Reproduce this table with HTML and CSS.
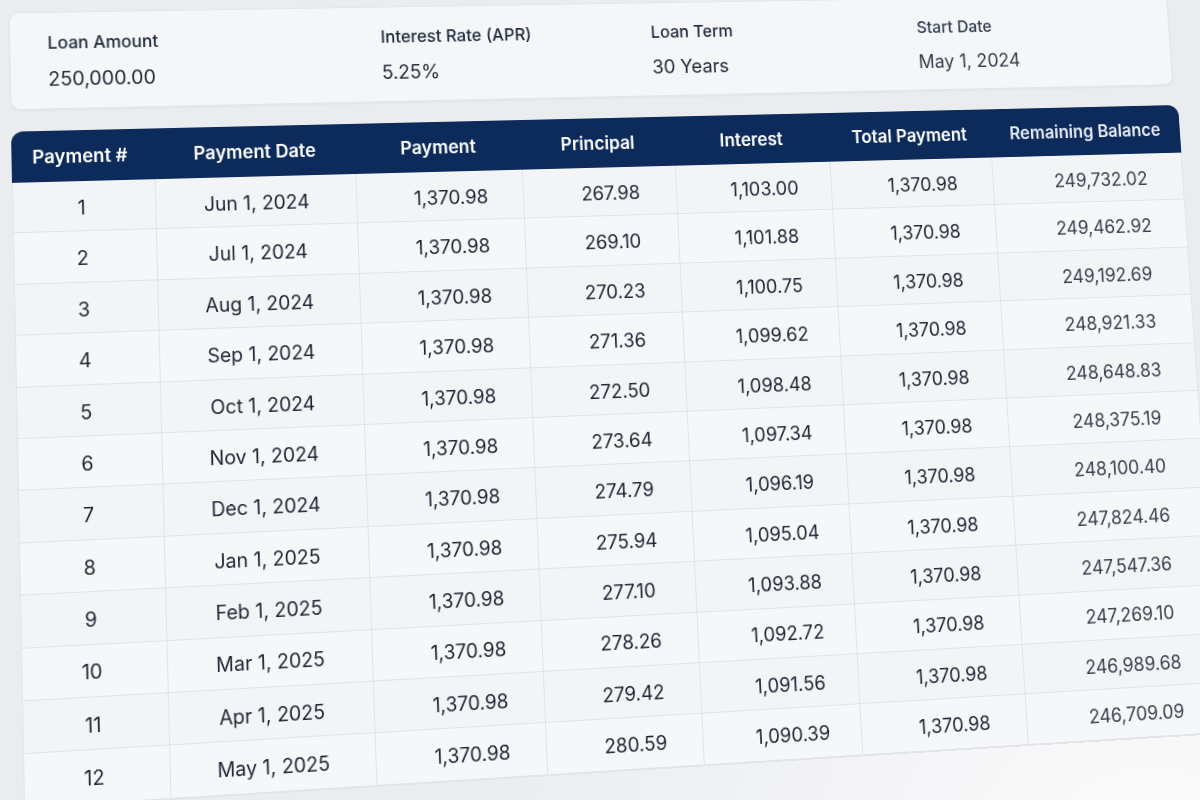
FILE: index.html
```html
<!DOCTYPE html>
<html lang="en">
<head>
<meta charset="utf-8">
<title>Amortization Schedule</title>
<link rel="stylesheet" href="styles.css">
</head>
<body>
<div class="scene">
  <section class="summary">
    <div class="item"><div class="label">Loan Amount</div><div class="value">250,000.00</div></div>
    <div class="item"><div class="label">Interest Rate (APR)</div><div class="value">5.25%</div></div>
    <div class="item"><div class="label">Loan Term</div><div class="value">30 Years</div></div>
    <div class="item far"><div class="label">Start Date</div><div class="value">May 1, 2024</div></div>
  </section>
  <section class="table">
    <div class="row head">
      <div class="cell">Payment #</div>
      <div class="cell">Payment Date</div>
      <div class="cell">Payment</div>
      <div class="cell">Principal</div>
      <div class="cell">Interest</div>
      <div class="cell">Total Payment</div>
      <div class="cell last">Remaining Balance</div>
    </div>
    <div class="row"><div class="cell">1</div><div class="cell">Jun 1, 2024</div><div class="cell num">1,370.98</div><div class="cell num">267.98</div><div class="cell num">1,103.00</div><div class="cell num">1,370.98</div><div class="cell num last">249,732.02</div></div>
    <div class="row"><div class="cell">2</div><div class="cell">Jul 1, 2024</div><div class="cell num">1,370.98</div><div class="cell num">269.10</div><div class="cell num">1,101.88</div><div class="cell num">1,370.98</div><div class="cell num last">249,462.92</div></div>
    <div class="row"><div class="cell">3</div><div class="cell">Aug 1, 2024</div><div class="cell num">1,370.98</div><div class="cell num">270.23</div><div class="cell num">1,100.75</div><div class="cell num">1,370.98</div><div class="cell num last">249,192.69</div></div>
    <div class="row"><div class="cell">4</div><div class="cell">Sep 1, 2024</div><div class="cell num">1,370.98</div><div class="cell num">271.36</div><div class="cell num">1,099.62</div><div class="cell num">1,370.98</div><div class="cell num last">248,921.33</div></div>
    <div class="row"><div class="cell">5</div><div class="cell">Oct 1, 2024</div><div class="cell num">1,370.98</div><div class="cell num">272.50</div><div class="cell num">1,098.48</div><div class="cell num">1,370.98</div><div class="cell num last">248,648.83</div></div>
    <div class="row"><div class="cell">6</div><div class="cell">Nov 1, 2024</div><div class="cell num">1,370.98</div><div class="cell num">273.64</div><div class="cell num">1,097.34</div><div class="cell num">1,370.98</div><div class="cell num last">248,375.19</div></div>
    <div class="row"><div class="cell">7</div><div class="cell">Dec 1, 2024</div><div class="cell num">1,370.98</div><div class="cell num">274.79</div><div class="cell num">1,096.19</div><div class="cell num">1,370.98</div><div class="cell num last">248,100.40</div></div>
    <div class="row"><div class="cell">8</div><div class="cell">Jan 1, 2025</div><div class="cell num">1,370.98</div><div class="cell num">275.94</div><div class="cell num">1,095.04</div><div class="cell num">1,370.98</div><div class="cell num last">247,824.46</div></div>
    <div class="row"><div class="cell">9</div><div class="cell">Feb 1, 2025</div><div class="cell num">1,370.98</div><div class="cell num">277.10</div><div class="cell num">1,093.88</div><div class="cell num">1,370.98</div><div class="cell num last">247,547.36</div></div>
    <div class="row"><div class="cell">10</div><div class="cell">Mar 1, 2025</div><div class="cell num">1,370.98</div><div class="cell num">278.26</div><div class="cell num">1,092.72</div><div class="cell num">1,370.98</div><div class="cell num last">247,269.10</div></div>
    <div class="row"><div class="cell">11</div><div class="cell">Apr 1, 2025</div><div class="cell num">1,370.98</div><div class="cell num">279.42</div><div class="cell num">1,091.56</div><div class="cell num">1,370.98</div><div class="cell num last">246,989.68</div></div>
    <div class="row"><div class="cell">12</div><div class="cell">May 1, 2025</div><div class="cell num">1,370.98</div><div class="cell num">280.59</div><div class="cell num">1,090.39</div><div class="cell num">1,370.98</div><div class="cell num last">246,709.09</div></div>
  </section>
</div>
</body>
</html>
```
FILE: styles.css
```css
html, body {
  margin: 0;
  height: 100%;
  overflow: hidden;
}
body {
  background: radial-gradient(ellipse 700px 420px at 1150px 820px, #fbfbfc 0%, #f1f2f4 55%, #eaecef 100%);
  font-family: Inter, "Noto Sans", "Liberation Sans", sans-serif;
  color: #1d2533;
}
.scene {
  width: 1240px;
  transform-origin: 0 0;
  transform: matrix3d(1.011508, -0.015259, 0, 0.00005975, 0.018545, 0.976410, 0, -0.00004307, 0, 0, 1, 0, 8.7375, 12.578, 0, 1.005254);
}
.summary {
  box-sizing: border-box;
  width: 1236px;
  height: 100px;
  padding: 20px 0 0 37px;
  display: grid;
  grid-template-columns: 339px 285px 290px 1fr;
  background: #f5f6f8;
  border: 1px solid #e3e6ea;
  border-radius: 10px;
  box-shadow: 0 1px 3px rgba(30, 40, 60, 0.05);
}
.label {
  font-size: 17.5px;
  line-height: 22px;
  font-weight: 500;
  color: #1f2a3c;
}
.value {
  margin-top: 14px;
  font-size: 19.7px;
  line-height: 24px;
  color: #1f2733;
}
.far {
  filter: blur(0.5px);
  opacity: 0.9;
}
.table {
  margin-top: 22px;
  width: 1240px;
  background: #f3f4f6;
  border: 1px solid #e2e5e9;
  border-top: 0;
  border-radius: 12px 12px 0 0;
  box-sizing: border-box;
}
.row {
  display: grid;
  grid-template-columns: 142px 204px 173px 162px 167px 178px 1fr;
  height: 51.4px;
  border-bottom: 1px solid #e0e3e7;
  box-sizing: border-box;
}
.row:nth-child(odd) {
  background: #f6f7f8;
}
.row.head {
  height: 52px;
  background: #0c2a5a;
  color: #ffffff;
  border-radius: 12px 12px 0 0;
  border-bottom: 0;
  margin: 0 -1px;
}
.cell {
  display: flex;
  align-items: center;
  justify-content: center;
  padding-top: 3.5px;
  font-size: 19.5px;
  border-right: 1px solid #e0e3e7;
}
.cell:last-child {
  border-right: 0;
}
.head .cell {
  padding-top: 0;
  font-size: 18.5px;
  font-weight: 600;
  border-right: 0;
}
.num {
  padding-left: 22px;
}
.row .cell:first-child {
  padding-right: 6px;
}
.num.last {
  padding-left: 28px;
}
.last {
  color: #3a4250;
  filter: blur(0.4px);
}
.head .last {
  color: #e8ecf3;
}
```
